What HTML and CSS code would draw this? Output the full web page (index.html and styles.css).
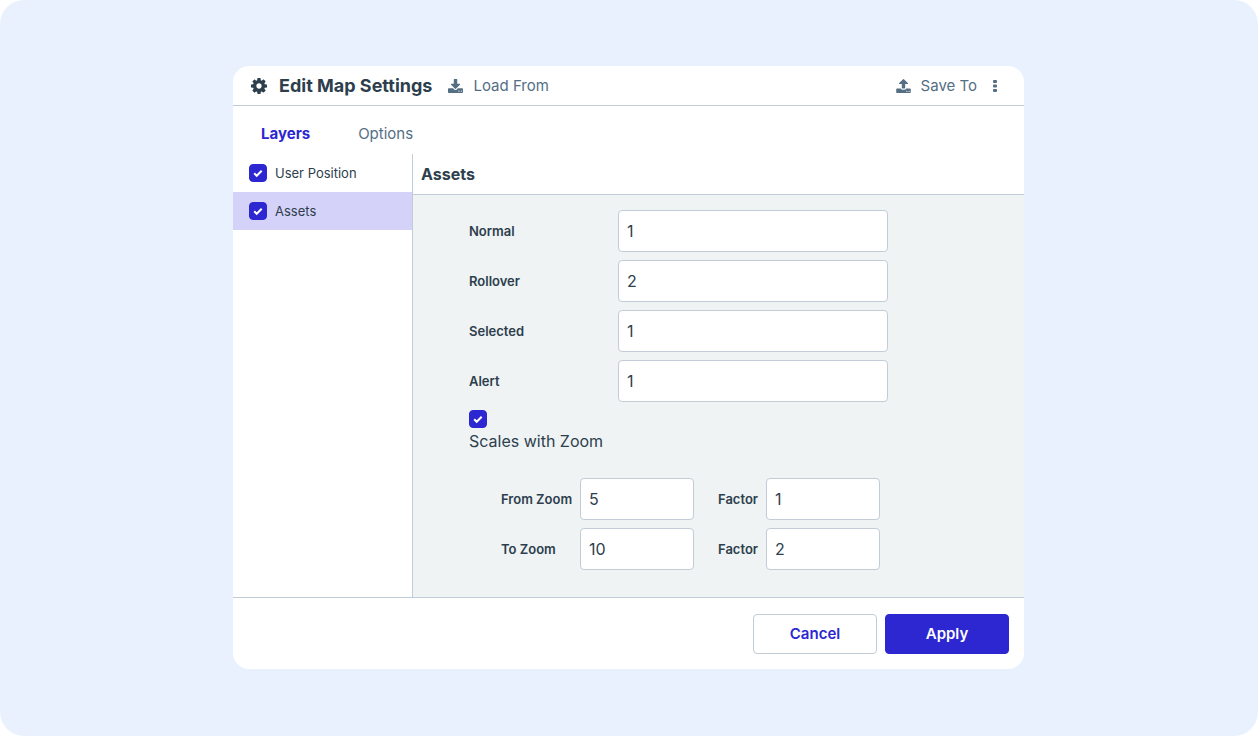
FILE: index.html
```html
<!DOCTYPE html>
<html lang="en">
<head>
<meta charset="utf-8">
<title>Edit Map Settings</title>
<link rel="stylesheet" href="styles.css">
</head>
<body>
<main class="stage">
  <form class="dialog">
    <header class="header">
      <svg class="icon icon-gear" viewBox="0 0 1536 1536" aria-hidden="true"><path d="M1024 768q0-106-75-181t-181-75-181 75-75 181 75 181 181 75 181-75 75-181zm512-109v222q0 12-8 23t-20 13l-185 28q-19 54-39 91 35 50 107 138 10 12 10 25t-9 23q-27 37-99 108t-94 71q-12 0-26-9l-138-108q-44 23-91 38-16 136-29 186-7 28-36 28H657q-14 0-24.500-8.500T621 1509l-28-184q-49-16-90-37l-141 107q-10 9-25 9-14 0-25-11-126-114-165-168-7-10-7-23 0-12 8-23 15-21 51-66.500t54-70.500q-27-50-41-99L29 915q-13-2-21-12.500T0 879V657q0-12 8-23t19-13l186-28q14-46 39-92-40-57-107-138-10-12-10-24 0-10 9-23 26-36 98.500-107.500T337 137q13 0 26 10l138 107q44-23 91-38 16-136 29-186 7-28 36-28h222q14 0 24.500 8.500T915 33l28 184q49 16 90 37l142-107q9-9 24-9 13 0 25 10 129 119 165 170 7 8 7 22 0 12-8 23-15 21-51 66.500t-54 70.500q26 50 41 98l183 28q13 2 21 12.500t8 23.500z"/></svg>
      <h1 class="title">Edit Map Settings</h1>
      <button class="tool" type="button">
        <svg class="icon" viewBox="64 0 1664 1536" aria-hidden="true"><path d="M1344 1344q0-26-19-45t-45-19-45 19-19 45 19 45 45 19 45-19 19-45zm256 0q0-26-19-45t-45-19-45 19-19 45 19 45 45 19 45-19 19-45zm128-224v320q0 40-28 68t-68 28h-1472q-40 0-68-28t-28-68v-320q0-40 28-68t68-28h465l135 136q58 56 136 56t136-56l136-136h464q40 0 68 28t28 68zm-325-569q17 41-14 70l-448 448q-18 19-45 19t-45-19l-448-448q-31-29-14-70 17-39 59-39h256v-448q0-26 19-45t45-19h256q26 0 45 19t19 45v448h256q42 0 59 39z"/></svg>
        Load From
      </button>
      <button class="tool tool-save" type="button">
        <svg class="icon" viewBox="64 64 1664 1600" aria-hidden="true"><path d="M1344 1472q0-26-19-45t-45-19-45 19-19 45 19 45 45 19 45-19 19-45zm256 0q0-26-19-45t-45-19-45 19-19 45 19 45 45 19 45-19 19-45zm128-224v320q0 40-28 68t-68 28h-1472q-40 0-68-28t-28-68v-320q0-40 28-68t68-28h427q21 56 70.500 92t110.500 36h256q61 0 110.500-36t70.500-92h427q40 0 68 28t28 68zm-325-648q-17 40-59 40h-256v448q0 26-19 45t-45 19h-256q-26 0-45-19t-19-45v-448h-256q-42 0-59-40-17-39 14-69l448-448q18-19 45-19t45 19l448 448q31 30 14 69z"/></svg>
        Save To
      </button>
      <button class="more" type="button" aria-label="More">
        <svg class="icon-more" viewBox="0 0 4 12" aria-hidden="true"><rect width="4" height="3" rx="1"/><rect y="4.500" width="4" height="3" rx="1"/><rect y="9" width="4" height="3" rx="1"/></svg>
      </button>
    </header>

    <nav class="tabs">
      <a class="tab tab-active" href="#layers">Layers</a>
      <a class="tab" href="#options">Options</a>
    </nav>

    <div class="body">
      <aside class="layers">
        <label class="layer"><span class="box"><input class="check" type="checkbox" checked><svg class="tick" viewBox="0 0 18 18" aria-hidden="true"><path d="M5.200 9.300l2.500 2.500 5-5"/></svg></span>User Position</label>
        <label class="layer layer-selected"><span class="box"><input class="check" type="checkbox" checked><svg class="tick" viewBox="0 0 18 18" aria-hidden="true"><path d="M5.200 9.300l2.500 2.500 5-5"/></svg></span>Assets</label>
      </aside>

      <section class="panel">
        <h2 class="panel-title">Assets</h2>
        <div class="fields">
          <div class="row"><label class="label" for="normal">Normal</label><input class="input" id="normal" type="text" value="1"></div>
          <div class="row"><label class="label" for="rollover">Rollover</label><input class="input" id="rollover" type="text" value="2"></div>
          <div class="row"><label class="label" for="selected">Selected</label><input class="input" id="selected" type="text" value="1"></div>
          <div class="row"><label class="label" for="alert">Alert</label><input class="input" id="alert" type="text" value="1"></div>
          <label class="scales"><span class="box"><input class="check" type="checkbox" checked><svg class="tick" viewBox="0 0 18 18" aria-hidden="true"><path d="M5.200 9.300l2.500 2.500 5-5"/></svg></span>Scales with Zoom</label>
          <div class="zooms">
            <label class="label" for="from">From Zoom</label><input class="input" id="from" type="text" value="5">
            <label class="label label-factor" for="from-factor">Factor</label><input class="input" id="from-factor" type="text" value="1">
            <label class="label" for="to">To Zoom</label><input class="input" id="to" type="text" value="10">
            <label class="label label-factor" for="to-factor">Factor</label><input class="input" id="to-factor" type="text" value="2">
          </div>
        </div>
      </section>
    </div>

    <footer class="footer">
      <button class="btn" type="button">Cancel</button>
      <button class="btn btn-primary" type="button">Apply</button>
    </footer>
  </form>
</main>
</body>
</html>
```
FILE: styles.css
```css
:root {
  --ink: #2d3e4d;
  --slate: #546e84;
  --line: #c1ccd6;
  --brand: #2c27d1;
}

* {
  box-sizing: border-box;
}

body {
  margin: 0;
  background: #fff;
  color: var(--ink);
  font: 16px/24px Inter, "Liberation Sans", sans-serif;
}

button,
input {
  font: inherit;
  color: inherit;
}

button {
  padding: 0;
  border: 0;
  background: none;
  cursor: pointer;
}

.stage {
  display: flex;
  justify-content: center;
  align-items: center;
  min-height: 100vh;
  padding: 24px 24px 25px 23px;
  border-radius: 24px;
  background: #eaf1fe;
}

.dialog {
  display: flex;
  flex-direction: column;
  width: 100%;
  max-width: 791px;
  border-radius: 16px;
  background: #fff;
  overflow: hidden;
}

.header {
  display: flex;
  align-items: center;
  padding: 7px 27px 7px 18px;
  border-bottom: 1px solid var(--line);
}

.icon {
  width: 15px;
  height: 14px;
  fill: currentColor;
}

.icon-gear {
  width: 16px;
  height: 16px;
}

.title {
  margin: 0 16px 0 12px;
  font-size: 18px;
  line-height: 24px;
  font-weight: 700;
}

.tool {
  display: flex;
  align-items: center;
  gap: 10px;
  padding-top: 1px;
  color: var(--slate);
  font-size: 15px;
}

.tool-save {
  margin-left: auto;
}

.more {
  display: flex;
  margin-left: 16px;
  color: var(--slate);
}

.icon-more {
  width: 4px;
  height: 12px;
  fill: currentColor;
}

.tabs {
  display: flex;
  gap: 48px;
  padding: 16px 28px 8px;
}

.tab {
  color: var(--slate);
  font-size: 15px;
  text-decoration: none;
}

.tab-active {
  color: var(--brand);
  font-weight: 700;
}

.body {
  display: flex;
  border-bottom: 1px solid var(--line);
}

.layers {
  flex: 0 0 180px;
  border-right: 1px solid var(--line);
}

.layer {
  display: flex;
  align-items: center;
  gap: 8px;
  height: 38px;
  padding-left: 16px;
  font-size: 13px;
}

.layer-selected {
  background: #d5d2f9;
}

.box {
  display: grid;
  width: 18px;
  height: 18px;
}

.check,
.tick {
  grid-area: 1 / 1;
  width: 18px;
  height: 18px;
}

.check {
  appearance: none;
  margin: 0;
  border: 1px solid var(--brand);
  border-radius: 4px;
  background: #fff;
}

.check:checked {
  background: var(--brand);
}

.tick {
  fill: none;
  stroke: #fff;
  stroke-width: 2;
  pointer-events: none;
}

.panel {
  flex: 1;
}

.panel-title {
  margin: 0;
  padding: 8px;
  border-bottom: 1px solid var(--line);
  font-size: 16px;
  line-height: 24px;
  font-weight: 700;
}

.fields {
  display: flex;
  flex-direction: column;
  gap: 8px;
  padding: 15px 56px 27px;
  background: #eff3f4;
}

.row {
  display: grid;
  grid-template-columns: 149px minmax(0, 270px);
  align-items: center;
}

.label {
  font-size: 13px;
  font-weight: 600;
  white-space: nowrap;
}

.input {
  width: 100%;
  height: 42px;
  padding: 0 8px 1px;
  border: 1px solid var(--line);
  border-radius: 4px;
  background: #fff;
}

.scales {
  display: flex;
  flex-direction: column;
  gap: 1px;
  align-self: flex-start;
}

.zooms {
  display: grid;
  grid-template-columns: 71px 114px 56px 114px;
  align-items: center;
  gap: 8px;
  padding: 17px 0 0 32px;
}

.label-factor {
  padding-left: 16px;
}

.footer {
  display: flex;
  justify-content: flex-end;
  gap: 8px;
  padding: 16px 15px 15px;
}

.btn {
  width: 124px;
  height: 40px;
  border: 1px solid var(--line);
  border-radius: 4px;
  color: var(--brand);
  font-size: 15px;
  font-weight: 600;
}

.btn-primary {
  border-color: var(--brand);
  background: var(--brand);
  color: #fff;
}
```
